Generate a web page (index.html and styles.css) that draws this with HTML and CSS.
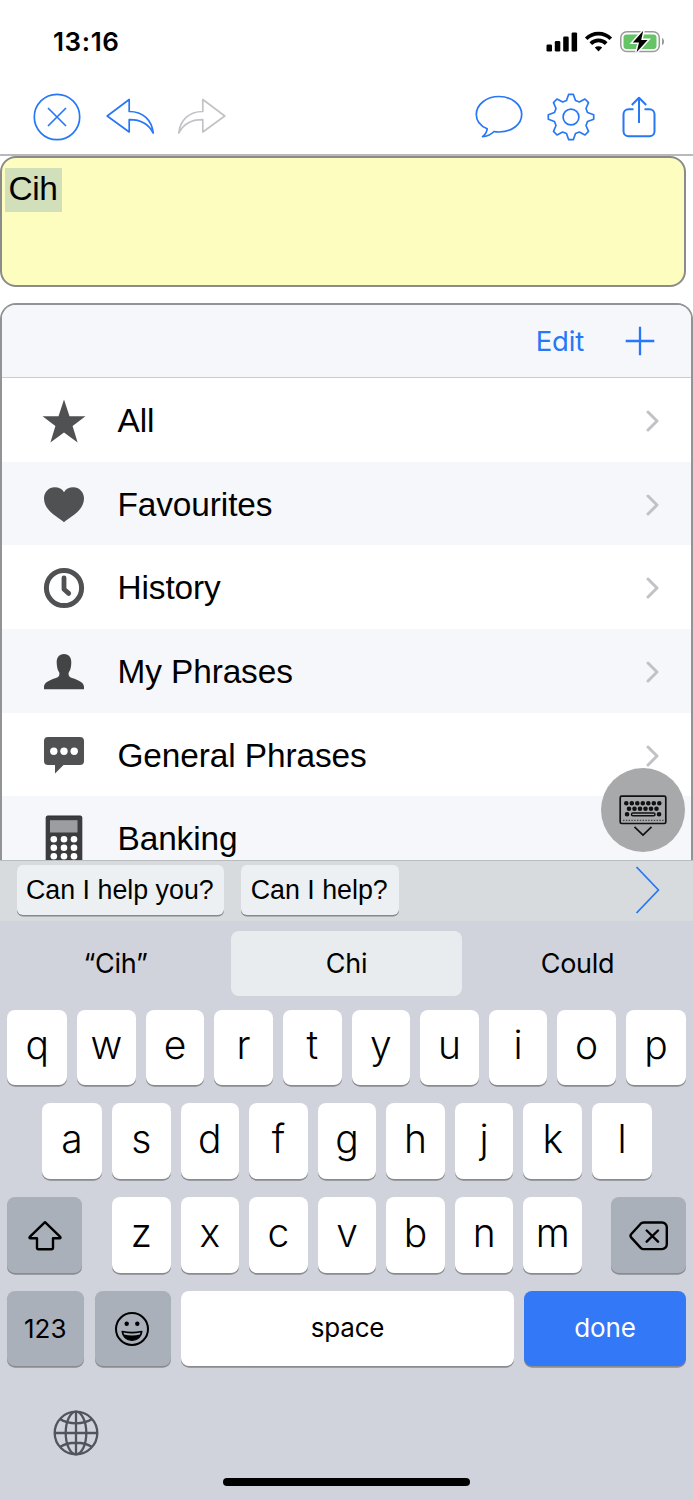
FILE: index.html
```html
<!DOCTYPE html>
<html lang="en">
<head>
<meta charset="utf-8">
<title>Phrases</title>
<link rel="stylesheet" href="styles.css">
</head>
<body>
<div class="phone">
  <header class="status">
    <span class="time">13:16</span>
    <svg class="status-icons" width="120" height="26" viewBox="0 0 120 26">
      <rect x="1.500" y="14.500" width="5.500" height="7" rx="1.300"/>
      <rect x="9.800" y="11" width="5.500" height="10.500" rx="1.300"/>
      <rect x="18.200" y="6.500" width="5.500" height="15" rx="1.300"/>
      <rect x="26.600" y="2.500" width="5.500" height="19" rx="1.300"/>
      <path d="M41.200 8.700a17.500 17.500 0 0 1 24.600 0M45.800 13.600a11 11 0 0 1 15.400 0" fill="none" stroke="#000" stroke-width="3.700"/>
      <path d="M49.800 17.600a5.400 5.400 0 0 1 7.400 0l-3.700 3.800z"/>
      <rect x="75.800" y="1.800" width="38.500" height="19.800" rx="6" fill="#fff" stroke="#9a9a9a" stroke-width="1.500"/>
      <rect x="78.500" y="4.500" width="33" height="14.400" rx="3" fill="#65c466"/>
      <path d="M117 8c2.800 1.200 2.800 6 0 7.200z" fill="#9a9a9a"/>
      <path d="M98.200 0.800L87.800 12.600h6.200l-2.400 9.600 11-12.200h-6.400z" stroke="#fff" stroke-width="3"/>
      <path d="M98.200 0.800L87.800 12.600h6.200l-2.400 9.600 11-12.200h-6.400z"/>
    </svg>
  </header>

  <nav class="toolbar">
    <svg width="48" height="48" viewBox="0 0 48 48" class="line"><circle cx="24" cy="24" r="22.700"/><path d="M15 15l18 18M33 15L15 33"/></svg>
    <svg width="48" height="48" viewBox="0 0 48 48" class="line undo"><path d="M1.200 23L23.200 6.500v12c14 0 22.500 8.500 24 21.500-5-9.500-12.500-13.500-24-13.300v12.300z"/></svg>
    <svg width="48" height="48" viewBox="0 0 48 48" class="line redo"><path d="M46.800 23L24.800 6.500v12c-14 0-22.500 8.500-24 21.500 5-9.500 12.500-13.500 24-13.300v12.300z"/></svg>
    <svg width="48" height="48" viewBox="0 0 48 48" class="line chat"><path d="M12.200 35.800C5.500 33 1.300 27.800 1.300 21.500 1.300 11.500 11.500 3.500 24 3.500s22.700 8 22.700 18S36.500 39 24 39c-1.800 0-3.500-.1-5-.5-3.500 3.500-7 5-11.500 5.200C10.500 41.200 11.800 39 12.200 35.800z"/></svg>
    <svg width="48" height="48" viewBox="0 0 48 48" class="line gear"><circle cx="24" cy="24" r="7.900"/><path d="M21.700 1.300h4.600l2.200 6.200 3.800 1.500L38 6l3.500 3.700-2.500 5.800 1.500 4 6.200 2.200v4.600l-6.200 2.200-1.500 4 2.500 5.800L38 42l-5.700-3-3.800 1.500-2.200 6.200h-4.600l-2.200-6.200-3.800-1.500-5.700 3-3.500-3.700L9 32.500l-1.500-4-6.200-2.200v-4.600l6.200-2.200 1.500-4-2.500-5.800L10 6l5.700 3 3.800-1.500z"/></svg>
    <svg width="34" height="48" viewBox="0 0 34 48" class="line share"><path d="M11.500 16.200H6.500a5 5 0 0 0-5 5v17a5 5 0 0 0 5 5h21a5 5 0 0 0 5-5v-17a5 5 0 0 0-5-5h-5M17 30V5.500M9.800 12L17 4.800 24.200 12"/></svg>
  </nav>

  <section class="editor"><span class="selected">Cih</span></section>

  <main class="panel">
    <div class="panel-head">
      <span class="edit">Edit</span>
      <svg width="30" height="30" viewBox="0 0 30 30" class="line plus"><path d="M15 .7v28.600M.7 15h28.600"/></svg>
    </div>
    <div class="row">
      <svg class="icon" width="44" height="44" viewBox="0 0 44 44"><path d="M22 0.500l5.500 16.700h16L30.600 27l5 16.500L22 33.500 8.400 43.500l5-16.500L.5 17.200h16z"/></svg>
      <span>All</span>
      <svg class="chev" width="14" height="22" viewBox="0 0 14 22"><path d="M2 2l9 9-9 9"/></svg>
    </div>
    <div class="row">
      <svg class="icon" width="44" height="44" viewBox="0 0 44 44"><path d="M22 39.200C18 35 2 28.500 2 15.500 2 9 7 4.300 12.500 4.300c4.500 0 7.800 1.700 9.500 5 1.700-3.300 5-5 9.500-5C37 4.300 42 9 42 15.500 42 28.500 26 35 22 39.200z"/></svg>
      <span>Favourites</span>
      <svg class="chev" width="14" height="22" viewBox="0 0 14 22"><path d="M2 2l9 9-9 9"/></svg>
    </div>
    <div class="row">
      <svg class="icon" width="44" height="44" viewBox="0 0 44 44"><circle cx="22" cy="22" r="17.600" fill="none" stroke="#505153" stroke-width="5"/><path d="M22 11.800v11.400l4.700 4.200" fill="none" stroke="#505153" stroke-width="4.800" stroke-linecap="round" stroke-linejoin="round"/></svg>
      <span>History</span>
      <svg class="chev" width="14" height="22" viewBox="0 0 14 22"><path d="M2 2l9 9-9 9"/></svg>
    </div>
    <div class="row">
      <svg class="icon person" width="44" height="44" viewBox="0 0 44 44"><path d="M22 4c5 0 7.500 3.500 7.300 9-.2 4.500-1 7.500-2.600 9.500-.4 3 .3 4.500 3.300 5.500 7 2.200 12 4.500 12 9v2.300H2V37c0-4.500 5-6.800 12-9 3-1 3.700-2.500 3.300-5.500-1.600-2-2.400-5-2.600-9.500C14.500 7.500 17 4 22 4z"/></svg>
      <span>My Phrases</span>
      <svg class="chev" width="14" height="22" viewBox="0 0 14 22"><path d="M2 2l9 9-9 9"/></svg>
    </div>
    <div class="row">
      <svg class="icon" width="44" height="44" viewBox="0 0 44 44"><path d="M6 3h32a4 4 0 0 1 4 4v20a4 4 0 0 1-4 4H21.500L13 39.500v-8.500H6a4 4 0 0 1-4-4v-20a4 4 0 0 1 4-4z"/><g fill="#fff"><circle cx="11.800" cy="17.200" r="3.700"/><circle cx="22" cy="17.200" r="3.700"/><circle cx="32.200" cy="17.200" r="3.700"/></g></svg>
      <span>General Phrases</span>
      <svg class="chev" width="14" height="22" viewBox="0 0 14 22"><path d="M2 2l9 9-9 9"/></svg>
    </div>
    <div class="row">
      <svg class="icon" width="44" height="50" viewBox="0 0 44 50"><rect x="4.200" y="2" width="35.600" height="50" rx="1.500" fill="#3b3c3e" stroke="#2c2d2f"/><rect x="8" y="6.200" width="27.500" height="12.300" fill="#9c9da0"/><g fill="#fff"><circle cx="11.800" cy="25.300" r="3.300"/><circle cx="22" cy="25.300" r="3.300"/><circle cx="32" cy="25.300" r="3.300"/><circle cx="11.800" cy="33.800" r="3.300"/><circle cx="22" cy="33.800" r="3.300"/><circle cx="32" cy="33.800" r="3.300"/><circle cx="11.800" cy="42.200" r="3.300"/><circle cx="22" cy="42.200" r="3.300"/><circle cx="32" cy="42.200" r="3.300"/></g></svg>
      <span>Banking</span>
    </div>
    <div class="hide-keyboard">
      <svg width="48" height="42" viewBox="0 0 48 42" fill="none" stroke="#111">
        <rect x="1.200" y="1.200" width="45.600" height="27.300" rx="1.500" stroke-width="1.700"/>
        <path d="M7.300 8.200h35" stroke-width="4.600" stroke-linecap="round" stroke-dasharray="0 5.500"/>
        <path d="M10 13.800h30" stroke-width="4.600" stroke-linecap="round" stroke-dasharray="0 5.500"/>
        <path d="M8 19.300h.1M40 19.300h.1" stroke-width="4.600" stroke-linecap="round"/>
        <rect x="12.500" y="18" width="23.500" height="2.800" rx="1.400" stroke-width="1.500"/>
        <path d="M4 25.300h41" stroke-width="1.300" stroke-dasharray="1.400 1.400" stroke="#444"/>
        <path d="M15.500 31.800l8.500 8.300 8.500-8.300" stroke-width="1.700"/>
      </svg>
    </div>
  </main>

  <div class="suggest">
    <span class="chip">Can I help you?</span>
    <span class="chip">Can I help?</span>
    <svg width="26" height="50" viewBox="0 0 26 50" class="line next"><path d="M1.500 2l22 23-22 23"/></svg>
  </div>

  <div class="keyboard">
    <div class="predict"><span>“Cih”</span><span class="active">Chi</span><span>Could</span></div>
    <div class="keys">
      <div class="krow"><b class="wide">q</b><b>w</b><b>e</b><b>r</b><b>t</b><b>y</b><b>u</b><b>i</b><b>o</b><b class="wide">p</b></div>
      <div class="krow second"><b class="wide">a</b><b>s</b><b>d</b><b>f</b><b>g</b><b>h</b><b>j</b><b>k</b><b class="wide">l</b></div>
      <div class="krow">
        <b class="mod shift"><svg width="36" height="32" viewBox="0 0 36 32"><path d="M18 2.200L33 16.700c1 1 .6 1.600-.5 1.600H26v9.800a1.200 1.200 0 0 1-1.200 1.200H11.200A1.200 1.200 0 0 1 10 28.100v-9.800H3.500c-1.100 0-1.500-.6-.5-1.600z"/></svg></b>
        <b>z</b><b>x</b><b>c</b><b>v</b><b>b</b><b>n</b><b>m</b>
        <b class="mod back"><svg width="40" height="32" viewBox="0 0 40 32"><path d="M14.500 2.500H33a4.800 4.800 0 0 1 4.800 4.800v17a4.800 4.800 0 0 1-4.800 4.800H14.500c-1.200 0-2-.4-2.800-1.200L2.300 17.600c-1-1.100-1-2.500 0-3.600l9.400-10.300c.8-.8 1.600-1.200 2.800-1.200zM17.700 10.500L29 21.700M29 10.500L17.700 21.700"/></svg></b>
      </div>
      <div class="krow">
        <b class="mod num">123</b>
        <b class="mod emoji"><svg width="36" height="36" viewBox="0 0 36 36"><circle cx="18" cy="18" r="16"/><path d="M8 20.300c6.500 1.500 13.500 1.500 20 0-.5 5.500-4.500 9-10 9s-9.500-3.500-10-9z" fill="#000" stroke-width="1.200"/><path d="M9.500 21.500c5.500 1.300 11.500 1.300 17 0l-.6 2.100c-5 1.200-10.800 1.200-15.800 0z" fill="#a9b0ba" stroke="none"/><circle cx="12.700" cy="12.700" r="2.200" fill="#000" stroke="none"/><circle cx="23.300" cy="12.700" r="2.200" fill="#000" stroke="none"/></svg></b>
        <b class="space">space</b>
        <b class="done">done</b>
      </div>
    </div>
    <svg class="globe" width="46" height="46" viewBox="0 0 46 46"><circle cx="23" cy="23" r="21.300"/><ellipse cx="23" cy="23" rx="10.300" ry="21.300"/><path d="M23 1.700v42.600M1.700 23h42.600M7 9c8.500 5.700 23.500 5.700 32 0M7 37c8.500-5.700 23.500-5.700 32 0"/></svg>
    <div class="home"></div>
  </div>
</div>
</body>
</html>
```
FILE: styles.css
```css
* { box-sizing: border-box; }
body { margin: 0; background: #fff; }
.phone {
  width: 693px;
  height: 1500px;
  overflow: hidden;
  display: flex;
  flex-direction: column;
  font-family: Inter, "Liberation Sans", sans-serif;
  color: #000;
}
.phone > * { flex: none; }
svg { display: block; flex: none; }

.status {
  height: 84px;
  padding: 0 28px 0 53px;
  display: flex;
  align-items: center;
  justify-content: space-between;
}
.time { font-size: 26px; font-weight: 600; letter-spacing: 0.6px; margin-top: -1px; }
.status-icons { margin-top: 2px; }

.toolbar {
  height: 72px;
  padding: 9px 37px 0 33px;
  display: flex;
  align-items: flex-start;
  border-bottom: 2px solid #b9b9bb;
}
.line { fill: none; stroke: #2777f6; stroke-width: 1.7; stroke-linejoin: round; }
.undo { margin-left: 25px; }
.redo { margin-left: 24px; stroke: #c2c3c6; }
.chat { margin-left: auto; }
.gear { margin-left: 24px; }
.share { margin-left: 27px; stroke-width: 2; }

.editor {
  width: 686px;
  height: 131px;
  margin-bottom: 16px;
  padding: 10px 2.5px;
  border: 2px solid #8b8c8a;
  border-radius: 16px;
  background: #fdfdc0;
}
.selected {
  display: inline-block;
  width: 57px;
  height: 44px;
  padding-left: 4px;
  background: #d1dfba;
  font: 33.5px/41px "Liberation Sans", Arial, sans-serif;
  letter-spacing: -0.5px;
}

.panel {
  position: relative;
  height: 557px;
  border: 2px solid #919395;
  border-bottom: 0;
  border-radius: 16px 16px 0 0;
}
.panel-head {
  height: 73px;
  padding-right: 36px;
  display: flex;
  align-items: center;
  justify-content: flex-end;
  gap: 41px;
  background: #f6f7fa;
  border-bottom: 1.5px solid #cbccce;
  border-radius: 14px 14px 0 0;
}
.edit { font-size: 27.5px; color: #2777f6; letter-spacing: -0.2px; }
.plus { stroke-width: 2.3; }
.row {
  height: 83.7px;
  padding: 1px 31px 0 39.5px;
  display: flex;
  align-items: center;
  font: 33.4px "Liberation Sans", Arial, sans-serif;
  letter-spacing: -0.1px;
}
.row > * { position: relative; top: 0.5px; }
.row:nth-child(odd) { background: #f6f7fa; }
.row:nth-child(7) { height: 63.5px; padding-top: 21px; overflow: hidden; }
.row .icon { margin-right: 32px; fill: #505153; }
.row .person { fill: #434446; }
.chev { margin-left: auto; fill: none; stroke: #c1c2c5; stroke-width: 3; stroke-linecap: round; stroke-linejoin: round; }
.hide-keyboard {
  position: absolute;
  right: 6.5px;
  top: 463px;
  width: 84px;
  height: 84px;
  border-radius: 50%;
  background: #a8a9ab;
  display: flex;
  align-items: center;
  justify-content: center;
}
.hide-keyboard svg { margin-top: 12px; }

.suggest {
  height: 61px;
  padding: 4px 32px 0 17px;
  display: flex;
  align-items: flex-start;
  gap: 17px;
  background: #d7dbde;
  border-top: 1.5px solid #b9bcbf;
}
.chip {
  height: 50px;
  padding: 0 10px 0 9px;
  border-radius: 6px;
  background: #ecf0f2;
  box-shadow: 0 1.5px 0 #878a8c;
  font: 26.8px/50px "Liberation Sans", Arial, sans-serif;
}
.chip + .chip { padding: 0 11px 0 10px; }
.next { margin-left: auto; stroke-width: 1.8; }

.keyboard { height: 579px; background: #d0d3db; }
.predict {
  height: 88.5px;
  padding-top: 10px;
  display: grid;
  grid-template-columns: 231px 231px 231px;
  font-size: 27px;
  letter-spacing: -0.3px;
}
.predict span { height: 65px; display: flex; align-items: center; justify-content: center; }
.predict .active { background: #e8ecef; border-radius: 8px; }
.keys { display: flex; flex-direction: column; gap: 18.3px; }
.krow { display: flex; justify-content: center; gap: 10px; height: 75.5px; }
.krow.second { padding-left: 1px; }
.krow b {
  width: 58.6px;
  padding-bottom: 5px;
  display: flex;
  align-items: center;
  justify-content: center;
  border-radius: 8px;
  background: #fff;
  box-shadow: 0 1.7px 0 #898b8f;
  font-size: 39px;
  font-weight: 350;
}
.krow .wide { width: 60px; }
.krow .mod { background: #a9b0ba; padding: 2px 0 0; }
.krow .mod svg { fill: none; stroke: #000; stroke-width: 2.4; stroke-linejoin: round; stroke-linecap: round; }
.krow .shift { width: 75px; margin-right: 20px; padding-left: 2px; }
.krow .back { width: 75px; margin-left: 19px; }
.krow .num { width: 76.5px; padding: 0; font-size: 26px; font-weight: 400; }
.krow .emoji { width: 76.5px; margin-left: 1px; padding: 0 2px 0 0; }
.krow .emoji svg { stroke-width: 2; }
.krow .space { width: 333px; padding-bottom: 3px; font-size: 26px; font-weight: 400; letter-spacing: -0.2px; }
.krow .done { width: 162px; padding-bottom: 3px; font-size: 26px; font-weight: 400; letter-spacing: -0.1px; background: #3378f7; color: #fff; }
.globe { margin: 43.5px 0 0 53px; fill: none; stroke: #50545d; stroke-width: 2.3; }
.home { width: 247px; height: 8px; margin: 22px auto 0; border-radius: 4px; background: #000; }
```
